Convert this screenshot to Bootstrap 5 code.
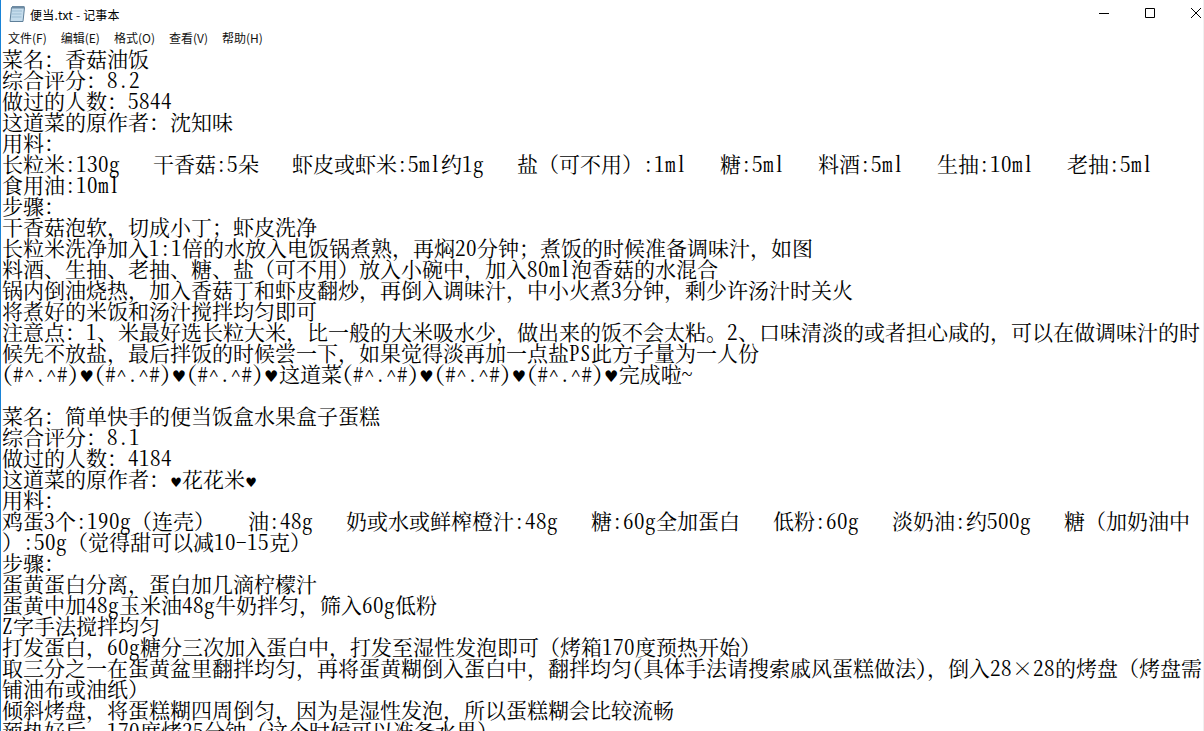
<!DOCTYPE html>
<html lang="zh"><head><meta charset="utf-8">
<link href="https://cdn.jsdelivr.net/npm/bootstrap@5.3.0/dist/css/bootstrap.min.css" rel="stylesheet">
<style>
html,body{height:100%;overflow:hidden;background:#fff}
.win-frame{height:731px;width:1204px;border-left:1px solid #1883d7;border-right:1px solid #f0f0f0;overflow:hidden}
.win-title{height:28px;font:12px "Noto Sans CJK SC",sans-serif;color:#000;letter-spacing:.2px}
.win-ctls{margin-right:-16px}
.win-ctl{width:46px;height:28px}
.win-menu{height:19px;padding-top:1px;font:12px "Noto Sans CJK SC",sans-serif;color:#111}
.win-menu span{margin-right:14px}
.win-menu .menu-first{margin-left:7px}
.win-rule{height:2px;background:#f0f0f0}
.doc{font:21px/21px "Noto Serif CJK SC","Noto Sans CJK SC",serif;color:#000;padding:2px 0 0 1px}
.doc i{font-style:normal;font-feature-settings:"hwid";letter-spacing:.5px}
.doc div{height:21px;white-space:pre}
.doc b{display:inline-block;width:15.3px;font:16px/21px "DejaVu Sans",sans-serif;text-align:center}
.doc b.hs{width:12px;font-size:13px}
.doc u{display:inline-block;width:21px;text-align:center;text-decoration:none}
</style></head><body>
<div class="win-frame d-flex flex-column">
<div class="win-title d-flex align-items-center">
<svg class="win-icon" width="29" height="20" viewBox="0 0 29 20"><path d="M10.5 3.5h13l-1.500 14h-13z" fill="#c4dcec" stroke="#5e7f99"/><path d="M11 2h12.500v2.500H11z" fill="#6e8ba3"/><path d="M11 7h10M10.500 10h10M10.500 13h10" stroke="#9dbdd3"/></svg>
<span>便当.txt - 记事本</span>
<div class="win-ctls ms-auto d-flex">
<svg class="win-ctl" viewBox="0 0 46 28"><path d="M18 13.500h10" stroke="#000"/></svg>
<svg class="win-ctl" viewBox="0 0 46 28"><path d="M18.500 8.500h9v9h-9z" fill="none" stroke="#000"/></svg>
<svg class="win-ctl" viewBox="0 0 46 28"><path d="M18 8l10 10M28 8L18 18" stroke="#000"/></svg>
</div></div>
<div class="win-menu d-flex align-items-center"><span class="menu-first">文件(F)</span><span>编辑(E)</span><span>格式(O)</span><span>查看(V)</span><span>帮助(H)</span></div>
<div class="win-rule"></div>
<div class="doc flex-grow-1">
<div>菜名：香菇油饭</div>
<div>综合评分：<i>8.2</i></div>
<div>做过的人数：<i>5844</i></div>
<div>这道菜的原作者：沈知味</div>
<div>用料：</div>
<div>长粒米<i>:130g   </i>干香菇<i>:5</i>朵<i>   </i>虾皮或虾米<i>:5ml</i>约<i>1g   </i>盐（可不用）<i>:1ml   </i>糖<i>:5ml   </i>料酒<i>:5ml   </i>生抽<i>:10ml   </i>老抽<i>:5ml</i></div>
<div>食用油<i>:10ml</i></div>
<div>步骤：</div>
<div>干香菇泡软，切成小丁；虾皮洗净</div>
<div>长粒米洗净加入<i>1:1</i>倍的水放入电饭锅煮熟，再焖<i>20</i>分钟；煮饭的时候准备调味汁，如图</div>
<div>料酒、生抽、老抽、糖、盐（可不用）放入小碗中，加入<i>80ml</i>泡香菇的水混合</div>
<div>锅内倒油烧热，加入香菇丁和虾皮翻炒，再倒入调味汁，中小火煮<i>3</i>分钟，剩少许汤汁时关火</div>
<div>将煮好的米饭和汤汁搅拌均匀即可</div>
<div>注意点：<i>1</i>、米最好选长粒大米，比一般的大米吸水少，做出来的饭不会太粘。<i>2</i>、口味清淡的或者担心咸的，可以在做调味汁的时</div>
<div>候先不放盐，最后拌饭的时候尝一下，如果觉得淡再加一点盐<i>PS</i>此方子量为一人份</div>
<div><i>(#^.^#)</i><b>♥</b><i>(#^.^#)</i><b>♥</b><i>(#^.^#)</i><b>♥</b>这道菜<i>(#^.^#)</i><b>♥</b><i>(#^.^#)</i><b>♥</b><i>(#^.^#)</i><b>♥</b>完成啦<i>~</i></div>
<div></div>
<div>菜名：简单快手的便当饭盒水果盒子蛋糕</div>
<div>综合评分：<i>8.1</i></div>
<div>做过的人数：<i>4184</i></div>
<div>这道菜的原作者：<b class="hs">♥</b>花花米<b class="hs">♥</b></div>
<div>用料：</div>
<div>鸡蛋<i>3</i>个<i>:190g</i>（连壳）<i>   </i>油<i>:48g   </i>奶或水或鲜榨橙汁<i>:48g   </i>糖<i>:60g</i>全加蛋白<i>   </i>低粉<i>:60g   </i>淡奶油<i>:</i>约<i>500g   </i>糖（加奶油中</div>
<div>）<i>:50g</i>（觉得甜可以减<i>10-15</i>克）</div>
<div>步骤：</div>
<div>蛋黄蛋白分离，蛋白加几滴柠檬汁</div>
<div>蛋黄中加<i>48g</i>玉米油<i>48g</i>牛奶拌匀，筛入<i>60g</i>低粉</div>
<div><i>Z</i>字手法搅拌均匀</div>
<div>打发蛋白，<i>60g</i>糖分三次加入蛋白中，打发至湿性发泡即可（烤箱<i>170</i>度预热开始）</div>
<div>取三分之一在蛋黄盆里翻拌均匀，再将蛋黄糊倒入蛋白中，翻拌均匀<i>(</i>具体手法请搜索戚风蛋糕做法<i>)</i>，倒入<i>28</i><u>×</u><i>28</i>的烤盘（烤盘需</div>
<div>铺油布或油纸）</div>
<div>倾斜烤盘，将蛋糕糊四周倒匀，因为是湿性发泡，所以蛋糕糊会比较流畅</div>
<div>预热好后，<i>170</i>度烤<i>25</i>分钟（这个时候可以准备水果）</div>
</div>
</div>
</body></html>
